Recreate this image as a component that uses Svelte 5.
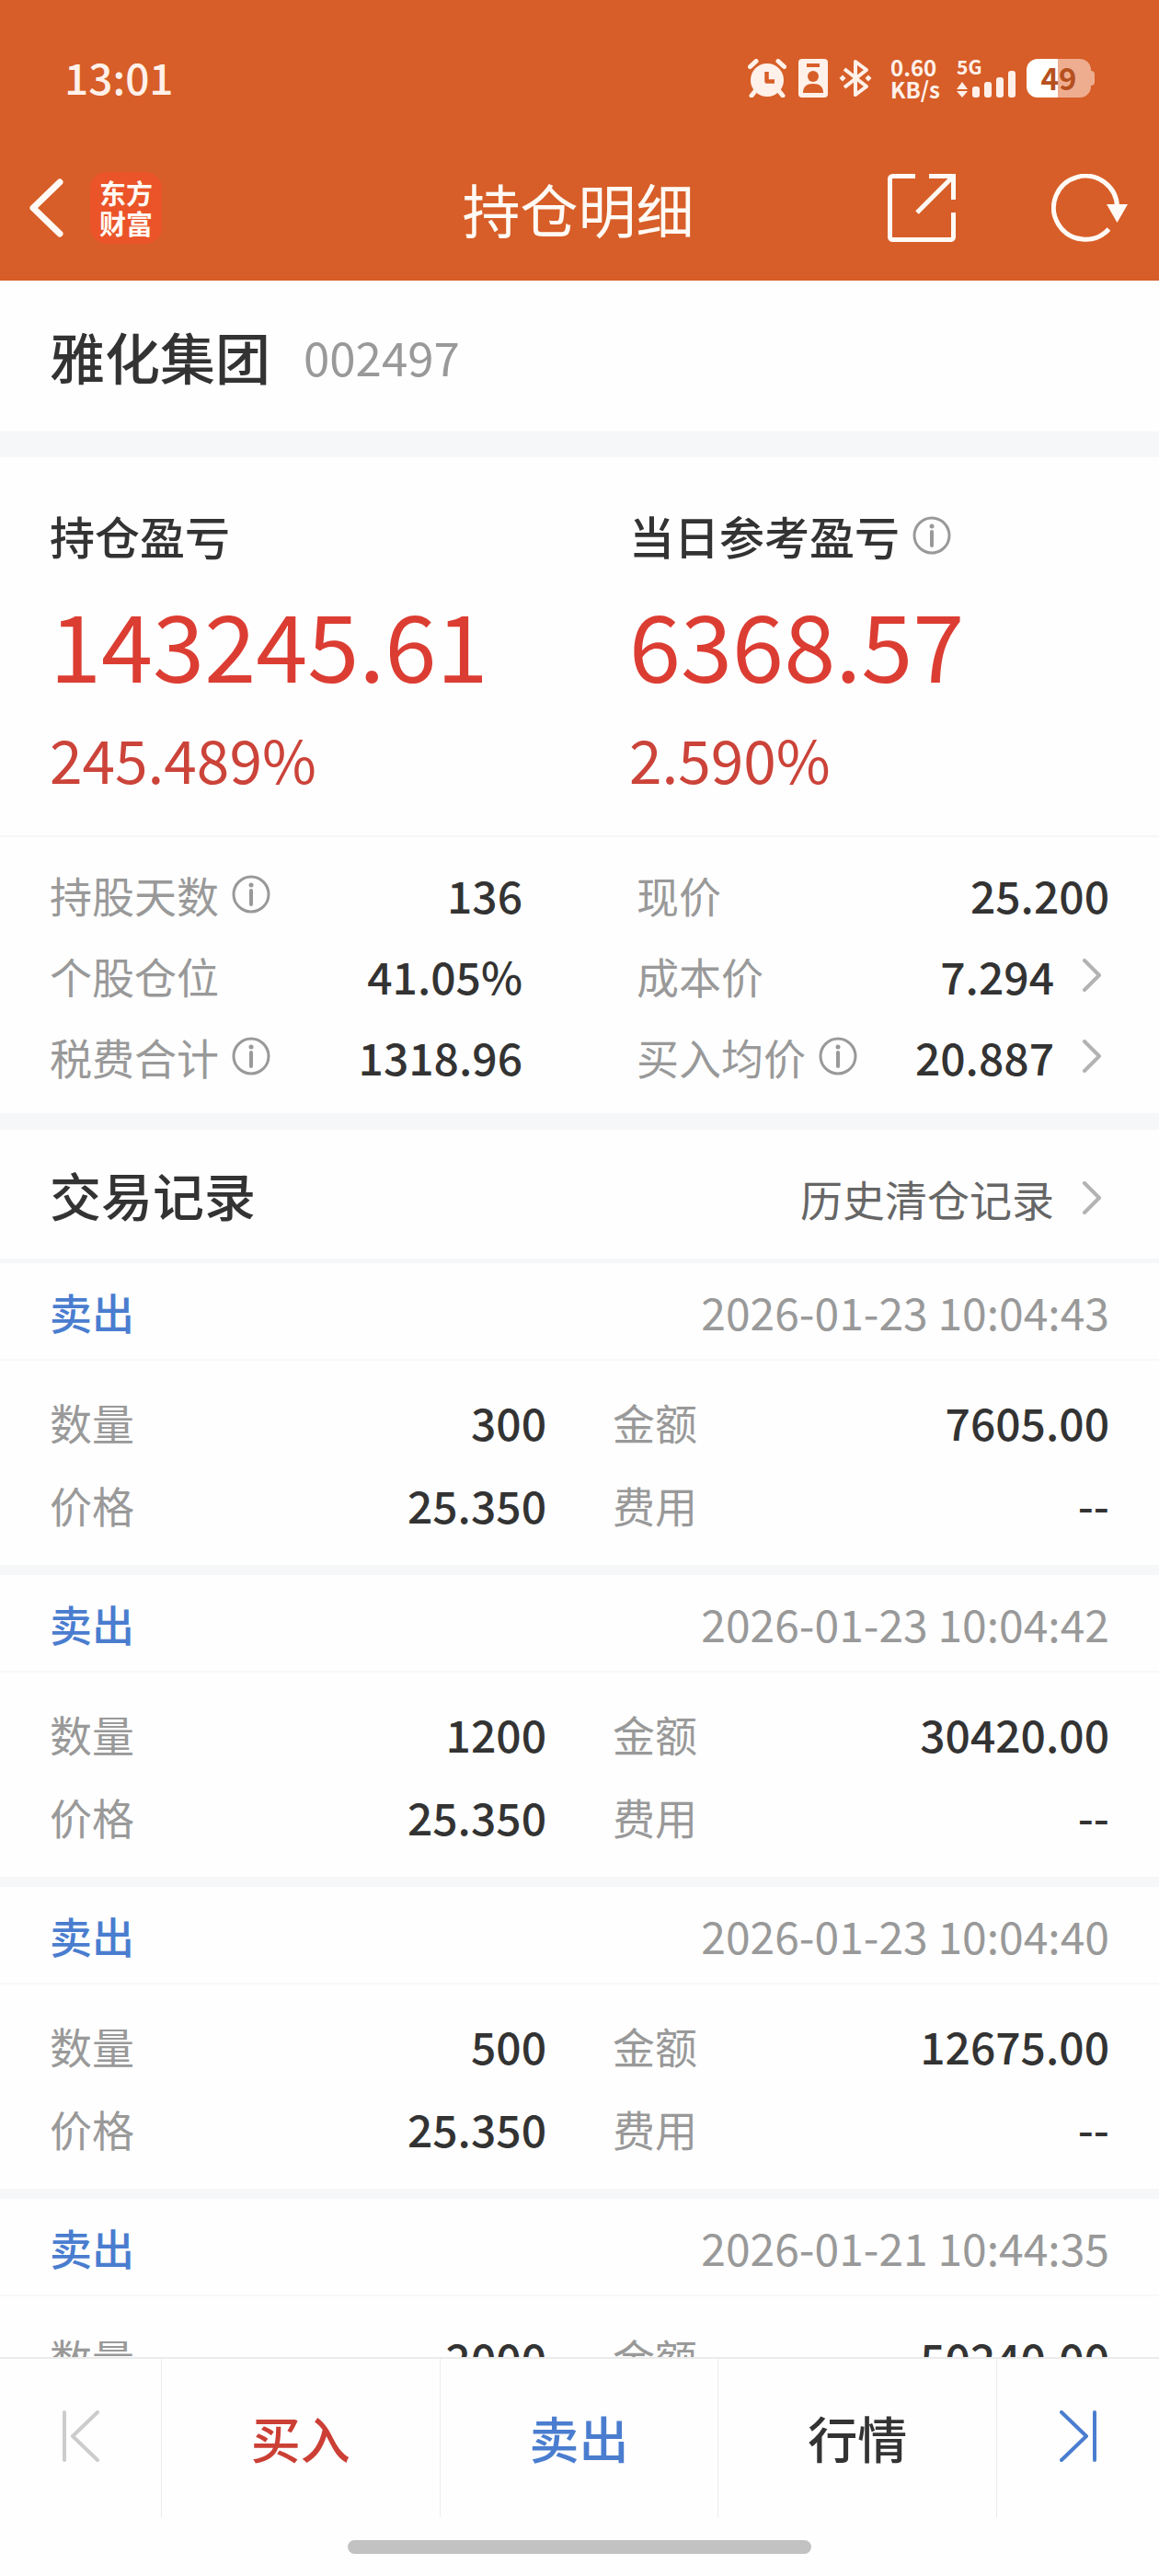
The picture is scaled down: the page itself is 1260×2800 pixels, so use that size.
<script>
  const stock = { name: "雅化集团", code: "002497" };

  const profits = [
    { label: "持仓盈亏", amount: "143245.61", percent: "245.489%" },
    { label: "当日参考盈亏", amount: "6368.57", percent: "2.590%", info: true },
  ];

  const stats = [
    { label: "持股天数", value: "136", info: true },
    { label: "现价", value: "25.200" },
    { label: "个股仓位", value: "41.05%" },
    { label: "成本价", value: "7.294", link: true },
    { label: "税费合计", value: "1318.96", info: true },
    { label: "买入均价", value: "20.887", info: true, link: true },
  ];

  const records = [
    { time: "2026-01-23 10:04:43", count: "300", amount: "7605.00", price: "25.350", fee: "--" },
    { time: "2026-01-23 10:04:42", count: "1200", amount: "30420.00", price: "25.350", fee: "--" },
    { time: "2026-01-23 10:04:40", count: "500", amount: "12675.00", price: "25.350", fee: "--" },
    { time: "2026-01-21 10:44:35", count: "2000", amount: "50240.00", price: "25.120", fee: "--" },
  ];
</script>

{#snippet infoIcon()}
  <button class="info" aria-label="说明">
    <svg width="42" height="42" viewBox="0 0 42 42" fill="none" stroke="#999" stroke-width="3">
      <circle cx="21" cy="21" r="19" />
      <path d="M21 17v15" stroke-width="4" stroke-linecap="round" />
      <circle cx="21" cy="11" r="2.5" fill="#999" stroke="none" />
    </svg>
  </button>
{/snippet}

{#snippet chevron()}
  <svg class="chevron" width="22" height="36" viewBox="0 0 22 36" fill="none" stroke="#b3b3b3" stroke-width="4" stroke-linecap="round" stroke-linejoin="round">
    <path d="M3 2l16 16L3 34" />
  </svg>
{/snippet}

<div class="page">
  <header>
    <div class="status">
      <span class="clock">13:01</span>
      <div class="indicators">
        <svg width="42" height="42" viewBox="0 0 42 42" fill="#fff1ea">
          <circle cx="21" cy="23" r="18" />
          <path d="M2.500 8.500L9 2.500M39.500 8.500L33 2.500M8 35l-4 5M34 35l4 5" stroke="#fff1ea" stroke-width="5" stroke-linecap="round" />
          <path d="M20.500 14v10.500H29" fill="none" stroke="#d75e28" stroke-width="4.500" stroke-linejoin="round" />
        </svg>
        <svg class="contact" width="32" height="42" viewBox="0 0 32 42">
          <rect width="32" height="42" rx="4" fill="#fff1ea" />
          <g fill="#d75e28">
            <rect x="9" y="5" width="14" height="4" />
            <circle cx="16" cy="19" r="6" />
            <path d="M5 37c0-7 4-10 11-10s11 3 11 10z" />
          </g>
        </svg>
        <svg width="36" height="42" viewBox="0 0 36 42" fill="none" stroke="#fff1ea" stroke-width="4">
          <path d="M6 11l24 19-12 9V3l12 9L6 31" stroke-linejoin="round" />
          <path d="M4 17.500l3.500 3.500L4 24.500.500 21zM32 17.500l3.500 3.500-3.500 3.500-3.500-3.500z" fill="#fff1ea" stroke="none" />
        </svg>
        <div class="speed"><span>0.60</span><span>KB/s</span></div>
        <div class="network">
          <span>5G</span>
          <svg width="64" height="30" viewBox="0 0 64 30" fill="#fff1ea">
            <path d="M6 13l6 8H0zM6 30l-6-7h12z" />
            <rect x="17" y="18" width="8" height="12" rx="3" />
            <rect x="30" y="13" width="8" height="17" rx="3" />
            <rect x="43" y="8" width="8" height="22" rx="3" />
            <rect x="56" y="1" width="8" height="29" rx="3" />
          </svg>
        </div>
        <div class="battery"><span>49</span></div>
      </div>
    </div>
    <nav class="titlebar">
      <div class="side">
        <button aria-label="返回">
          <svg width="40" height="66" viewBox="0 0 40 66" fill="none" stroke="#fffaf5" stroke-width="7" stroke-linecap="round" stroke-linejoin="round">
            <path d="M35 5L6 33l29 28" />
          </svg>
        </button>
        <div class="logo"><span>东方</span><span>财富</span></div>
      </div>
      <h1>持仓明细</h1>
      <div class="side tools">
        <button aria-label="分享">
          <svg width="74" height="74" viewBox="0 0 74 74" fill="none" stroke="#fffaf5" stroke-width="5">
            <path d="M30 2.500H5.500a3 3 0 0 0-3 3v63a3 3 0 0 0 3 3h63a3 3 0 0 0 3-3V42" />
            <path d="M45 2.500h26.500V28M70 4L32 42" />
          </svg>
        </button>
        <button aria-label="刷新">
          <svg width="84" height="74" viewBox="0 0 84 74" fill="none" stroke="#fffaf5" stroke-width="5">
            <path d="M62.500 60A34.500 34.500 0 1 1 71.500 37" />
            <path d="M60 33h23L71.500 53z" fill="#fffaf5" stroke="none" />
          </svg>
        </button>
      </div>
    </nav>
  </header>

  <main>
    <section class="stock">
      <h2>{stock.name}</h2>
      <span class="code">{stock.code}</span>
    </section>

    <section class="profits">
      {#each profits as profit}
        <div>
          <h3>{profit.label}{#if profit.info}{@render infoIcon()}{/if}</h3>
          <p class="amount">{profit.amount}</p>
          <p class="percent">{profit.percent}</p>
        </div>
      {/each}
    </section>

    <section class="stats">
      {#each stats as stat}
        <div class="row">
          <span class="label">{stat.label}{#if stat.info}{@render infoIcon()}{/if}</span>
          {#if stat.link}
            <a class="value" href="#detail">{stat.value}{@render chevron()}</a>
          {:else}
            <span class="value">{stat.value}</span>
          {/if}
        </div>
      {/each}
    </section>

    <section class="records">
      <div class="records-head">
        <h2>交易记录</h2>
        <a href="#history">历史清仓记录{@render chevron()}</a>
      </div>
      {#each records as record}
        <article>
          <div class="record-head">
            <span class="side-sell">卖出</span>
            <time>{record.time}</time>
          </div>
          <div class="record-body">
            <div class="row"><span class="label">数量</span><span class="value">{record.count}</span></div>
            <div class="row"><span class="label">金额</span><span class="value">{record.amount}</span></div>
            <div class="row"><span class="label">价格</span><span class="value">{record.price}</span></div>
            <div class="row"><span class="label">费用</span><span class="value">{record.fee}</span></div>
          </div>
        </article>
      {/each}
    </section>
  </main>

  <footer>
    <div class="actions">
      <button class="step" aria-label="上一个" disabled>
        <svg width="40" height="56" viewBox="0 0 40 56" fill="none" stroke="#ccc" stroke-width="4" stroke-linecap="round" stroke-linejoin="round">
          <path d="M2 2v52M38 2L11 28l27 26" />
        </svg>
      </button>
      <button class="buy">买入</button>
      <button class="sell">卖出</button>
      <button>行情</button>
      <button class="step" aria-label="下一个">
        <svg width="40" height="56" viewBox="0 0 40 56" fill="none" stroke="#4a7dcf" stroke-width="4" stroke-linecap="round" stroke-linejoin="round">
          <path d="M38 2v52M2 2l27 26L2 54" />
        </svg>
      </button>
    </div>
    <div class="home-bar"></div>
  </footer>
</div>

<style>
  :global(body) {
    margin: 0;
  }
  .page {
    display: flex;
    flex-direction: column;
    height: 100vh;
    background: #fefefe;
    color: #333;
    font-family: "Noto Sans CJK SC", sans-serif;
    font-size: 46px;
    line-height: 60px;
  }
  h1,
  h2,
  h3,
  p {
    margin: 0;
    font-weight: 500;
  }
  button {
    padding: 0;
    border: none;
    background: transparent;
    color: inherit;
    font: inherit;
    cursor: pointer;
  }
  a {
    color: inherit;
    text-decoration: none;
  }
  svg {
    display: block;
    flex: none;
  }
  header {
    flex: none;
    padding-bottom: 23px;
    background: #d75e28;
    color: #fffaf5;
  }
  .status {
    display: flex;
    align-items: center;
    justify-content: space-between;
    height: 170px;
    padding: 0 70px;
    color: #fff1ea;
    font-weight: 700;
  }
  .clock {
    padding-bottom: 4px;
    font-size: 46px;
    font-weight: 500;
  }
  .indicators {
    display: flex;
    align-items: center;
  }
  .contact {
    margin: 0 12px 0 13px;
  }
  .speed {
    display: flex;
    flex-direction: column;
    width: 72px;
    margin-left: 20px;
    font-size: 24px;
    line-height: 24px;
  }
  .network {
    display: flex;
    flex-direction: column;
    width: 64px;
    height: 42px;
    margin-right: 12px;
  }
  .network span {
    height: 12px;
    font-size: 21px;
    line-height: 16px;
  }
  .battery {
    position: relative;
    width: 70px;
    height: 42px;
    margin-right: 4px;
    border-radius: 12px;
    background: linear-gradient(90deg, #fff 34px, #efad90 34px);
    color: #b5501f;
    font-size: 33px;
    line-height: 40px;
    text-align: center;
  }
  .battery::after {
    content: "";
    position: absolute;
    top: 13px;
    right: -4px;
    width: 4px;
    height: 16px;
    border-radius: 0 4px 4px 0;
    background: #efad90;
  }
  .titlebar {
    display: grid;
    grid-template-columns: 1fr auto 1fr;
    align-items: center;
    height: 112px;
    padding: 0 33px 0 30px;
  }
  .side {
    display: flex;
    align-items: center;
    gap: 28px;
  }
  .tools {
    justify-content: flex-end;
    gap: 104px;
  }
  h1 {
    font-size: 63px;
    font-weight: 400;
    line-height: 80px;
  }
  .logo {
    display: flex;
    flex-direction: column;
    justify-content: center;
    width: 78px;
    height: 78px;
    border-radius: 18px;
    background: #eb5428;
    font-size: 29px;
    font-weight: 700;
    line-height: 33px;
    text-align: center;
  }
  main {
    flex: 1;
    min-height: 0;
    overflow: auto;
    scrollbar-width: none;
  }
  .stock {
    display: flex;
    align-items: center;
    gap: 36px;
    height: 164px;
    padding: 0 54px;
    border-bottom: 28px solid #f6f7f9;
  }
  .stock h2 {
    font-size: 60px;
    line-height: 80px;
  }
  .code {
    color: #999;
    font-size: 51px;
  }
  .profits {
    display: grid;
    grid-template-columns: 1fr 1fr;
    gap: 108px;
    padding: 55px 54px 40px;
    border-bottom: 2px solid #f6f7f9;
  }
  h3 {
    display: flex;
    align-items: center;
    font-size: 49px;
  }
  .amount {
    margin-top: 26px;
    color: #dc3d33;
    font-size: 101px;
    font-weight: 400;
    line-height: 120px;
  }
  .percent {
    margin-top: 22px;
    color: #cb4339;
    font-size: 64px;
    font-weight: 400;
    line-height: 88px;
  }
  .info {
    margin-left: 14px;
  }
  .stats {
    display: grid;
    grid-template-columns: 1fr 1fr;
    column-gap: 124px;
    padding: 18px 54px;
    border-bottom: 18px solid #f6f7f9;
  }
  .row {
    display: flex;
    align-items: center;
    justify-content: space-between;
    height: 88px;
  }
  .label {
    display: flex;
    align-items: center;
    color: #999;
  }
  .value {
    display: flex;
    align-items: center;
    font-size: 48px;
    font-weight: 500;
  }
  .chevron {
    margin: 0 8px 0 30px;
  }
  .records-head {
    display: flex;
    align-items: center;
    justify-content: space-between;
    height: 140px;
    padding: 0 54px;
    border-bottom: 5px solid #f6f7f9;
  }
  .records-head h2 {
    font-size: 56px;
  }
  .records-head a {
    display: flex;
    align-items: center;
    padding-top: 8px;
    color: #666;
  }
  article {
    border-bottom: 11px solid #f6f7f9;
  }
  .record-head {
    display: flex;
    align-items: center;
    justify-content: space-between;
    height: 104px;
    padding: 0 54px;
    border-bottom: 2px solid #f8f8fa;
  }
  .side-sell {
    color: #4a7dcf;
    font-weight: 500;
  }
  time {
    color: #999;
    font-size: 48px;
  }
  .record-body {
    display: grid;
    grid-template-columns: 1fr 1fr;
    column-gap: 72px;
    padding: 21px 54px;
  }
  .record-body .row {
    height: 90px;
  }
  footer {
    flex: none;
    border-top: 2px solid #ebebeb;
  }
  .actions {
    display: grid;
    grid-template-columns: 176px 1fr 1fr 1fr 176px;
    height: 172px;
  }
  .actions button {
    border-right: 1px solid #ebebeb;
    font-size: 54px;
    font-weight: 500;
  }
  .actions button:last-child {
    border-right: none;
  }
  .actions .step {
    display: grid;
    place-items: center;
    padding-bottom: 4px;
  }
  .actions .buy {
    color: #cb3f35;
  }
  .actions .sell {
    color: #4a7dcf;
  }
  .home-bar {
    width: 40%;
    height: 15px;
    margin: 25px auto 24px;
    border-radius: 8px;
    background: #c2c2c2;
  }
</style>
